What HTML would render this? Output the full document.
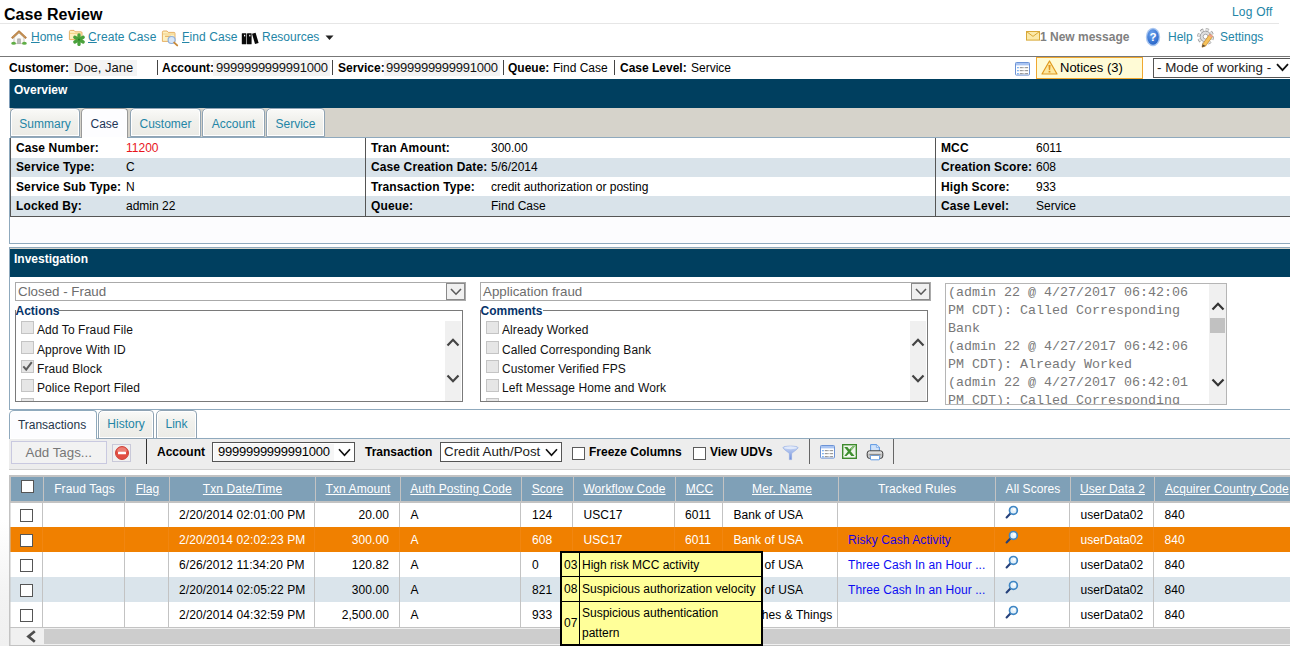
<!DOCTYPE html>
<html><head><meta charset="utf-8"><title>Case Review</title>
<style>
*{box-sizing:border-box;margin:0;padding:0}
html,body{width:1290px;height:646px;overflow:hidden;background:#fff}
body{font-family:"Liberation Sans",Arial,sans-serif;font-size:12px;color:#000;position:relative}
.a{position:absolute;white-space:nowrap}
.t{position:absolute;white-space:nowrap;line-height:14px;height:14px}
.b{font-weight:bold}
.lk{color:#2385a6}
.u{text-decoration:underline}
.bar{position:absolute;left:9px;width:1281px;height:29px;border-left:1px solid #7f9db9;background:#003f5f;color:#fff;font-weight:bold}
.tab{position:absolute;height:29px;border:1px solid #8fa3b3;border-radius:5px 4px 0 0;background:linear-gradient(to bottom,#fafaf8,#f1f1ed 40%,#ebebe6);color:#2385a6;line-height:30px;text-align:center;box-shadow:inset 0 0 0 1px #fff}
.tab.sel{background:#fdfdff;color:#1d3557;border-bottom:none}
.sep{position:absolute;width:1px;background:#333}
.cb{position:absolute;width:13px;height:13px;border:1px solid #5a5a5a;background:#fff}
.cbd{position:absolute;width:13px;height:13px;border:1px solid #c4c4c4;background:#e6e6e6}
.sel{position:absolute;border:1px solid #999;background:#fff}
</style></head><body>

<!-- header -->
<div class="a b" style="left:4px;top:6px;font-size:16px;line-height:18px;letter-spacing:0.05px">Case Review</div>
<div class="t lk" style="left:1232px;top:5px;letter-spacing:0.2px">Log Off</div>
<div class="a" style="left:0;top:23px;width:1279px;height:1px;background:#e6e6e6"></div>
<div class="a" style="left:0;top:56px;width:1290px;height:1px;background:#777"></div>

<!-- nav -->
<div id="nav">
<svg class="a" style="left:11px;top:30px" width="16" height="15" viewBox="0 0 16 15"><path d="M3 7.4 L8 3 L13 7.4 V13.6 H3Z" fill="#fbfaf6" stroke="#b9b2a4" stroke-width="0.7"/><path d="M0.8 8.2 L8 1.4 L15.2 8.2" fill="none" stroke="#b3783a" stroke-width="2.1" stroke-linejoin="round"/><path d="M1.6 7.6 L8 1.8 L14.4 7.6" fill="none" stroke="#d9b27a" stroke-width="0.7"/><rect x="6.4" y="8.6" width="3.2" height="5" fill="#8d8d8d"/><rect x="7" y="9.2" width="2" height="4.4" fill="#b9b9b9"/><ellipse cx="2.6" cy="13.2" rx="2.4" ry="1.5" fill="#5fae45"/><ellipse cx="13.4" cy="13.2" rx="2.4" ry="1.5" fill="#5fae45"/></svg>
<div class="t lk" style="left:31px;top:30px"><span class="u">H</span>ome</div>
<svg class="a" style="left:68px;top:29px" width="18" height="17" viewBox="0 0 18 17"><path d="M1.4 2.6 Q1.4 1.4 2.6 1.4 H6 L7.2 2.8 H13 Q14 2.8 14 3.8 V10.6 H1.4Z" fill="#fdf0c0" stroke="#e0a048" stroke-width="0.8"/><path d="M1.8 4.4 H13.6" stroke="#efc878" stroke-width="0.8"/><g stroke="#4aa23c" stroke-width="3.3" stroke-linecap="round"><path d="M11 5.8 V15.4"/><path d="M6.8 8.2 L15.2 13"/><path d="M15.2 8.2 L6.8 13"/></g><circle cx="11" cy="10.6" r="1.1" fill="#2f7d26"/></svg>
<div class="t lk" style="left:88px;top:30px;letter-spacing:0.1px"><span class="u">C</span>reate Case</div>
<svg class="a" style="left:161px;top:29px" width="18" height="18" viewBox="0 0 18 18"><path d="M1.4 3.2 Q1.4 2 2.6 2 H6 L7.2 3.4 H13 Q14 3.4 14 4.4 V12.4 H1.4Z" fill="#fdf0c0" stroke="#e0a048" stroke-width="0.8"/><path d="M1.8 5 H13.6" stroke="#efc878" stroke-width="0.8"/><rect x="4" y="6.8" width="6" height="0.9" fill="#e0a048"/><circle cx="10.6" cy="11" r="3.5" fill="#d7e6f8" stroke="#8fb0dc" stroke-width="1.2"/><path d="M13.2 13.6 L16.2 16.4" stroke="#c98a3a" stroke-width="1.9" stroke-linecap="round"/></svg>
<div class="t lk" style="left:182px;top:30px;letter-spacing:0.1px"><span class="u">F</span>ind Case</div>
<svg class="a" style="left:241px;top:32px" width="18" height="13" viewBox="0 0 18 13"><rect x="0.8" y="1.2" width="4.6" height="11" rx="0.5" fill="#0a0a0a"/><rect x="6" y="1.2" width="4.6" height="11" rx="0.5" fill="#0a0a0a"/><path d="M11 1.8 L14.6 0.8 L17.6 11 L14 12Z" fill="#0a0a0a"/><rect x="3" y="2.8" width="1.2" height="1.6" fill="#fff"/><rect x="8.2" y="2.8" width="1.2" height="1.6" fill="#fff"/></svg>
<div class="t lk" style="left:262px;top:30px">Resources</div>
<svg class="a" style="left:325px;top:35px" width="9" height="6" viewBox="0 0 9 6"><path d="M0.5 0.5 H8.5 L4.5 5Z" fill="#222"/></svg>

<svg class="a" style="left:1026px;top:31px" width="14" height="10" viewBox="0 0 14 10"><rect x="0.5" y="0.5" width="13" height="8.6" fill="#fbe9a8" stroke="#d8a838"/><path d="M0.5 0.5 L7 5.4 L13.5 0.5" fill="none" stroke="#d8a838"/></svg>
<div class="t b" style="left:1040px;top:30px;color:#808080">1 New message</div>
<svg class="a" style="left:1145px;top:27px" width="16" height="20" viewBox="0 0 16 20"><defs><radialGradient id="hg" cx="0.4" cy="0.3" r="0.8"><stop offset="0" stop-color="#6fa4ee"/><stop offset="1" stop-color="#1f5ec4"/></radialGradient></defs><ellipse cx="8" cy="10" rx="7.2" ry="9.2" fill="#a9c6f0"/><ellipse cx="8" cy="10" rx="5.8" ry="7.8" fill="url(#hg)"/><text x="8" y="14.2" font-family="Liberation Sans,sans-serif" font-weight="bold" font-size="11.5" fill="#fff" text-anchor="middle">?</text></svg>
<div class="t lk" style="left:1168px;top:30px">Help</div>
<svg class="a" style="left:1197px;top:27px" width="18" height="21" viewBox="0 0 18 21"><circle cx="8.6" cy="9.6" r="6.6" fill="none" stroke="#8f8f8f" stroke-width="3.6" stroke-dasharray="2.9 2.28"/><circle cx="8.6" cy="9.6" r="6.6" fill="none" stroke="#e2e2e2" stroke-width="2.4" stroke-dasharray="2.9 2.28"/><circle cx="8.6" cy="9.6" r="5.4" fill="#dedede" stroke="#8f8f8f" stroke-width="0.7"/><circle cx="8.6" cy="9.6" r="2.4" fill="#fff" stroke="#8f8f8f" stroke-width="0.7"/><path d="M5.6 17.2 L12.8 7 L15.8 9.2 L8.6 19 L5 20.2Z" fill="#f6c25a" stroke="#c8882a" stroke-width="0.7"/><path d="M12.8 7 L15.8 9.2 L14.8 10.6 L11.8 8.4Z" fill="#e89a9a"/><path d="M5.6 17.2 L8.6 19 L5 20.2Z" fill="#5a4a3a"/></svg>
<div class="t lk" style="left:1220px;top:30px">Settings</div>
</div>

<!-- customer row -->
<div id="cust">
<div class="t b" style="left:9px;top:61px">Customer:</div>
<div class="a" style="left:69px;top:60px;width:68px;height:16px;background:#f4f4f4"></div>
<div class="t" style="left:74px;top:60px;font-size:13px;line-height:16px;height:16px;color:#111">Doe, Jane</div>
<div class="sep" style="left:157px;top:60px;height:15px;background:#444"></div>
<div class="t b" style="left:162px;top:61px">Account:</div>
<div class="a" style="left:213px;top:60px;width:117px;height:16px;background:#f4f4f4"></div>
<div class="t" style="left:216px;top:60px;font-size:13px;line-height:16px;height:16px;color:#111;letter-spacing:-0.25px" id="acc1">9999999999991000</div>
<div class="sep" style="left:332px;top:60px;height:15px;background:#444"></div>
<div class="t b" style="left:338px;top:61px">Service:</div>
<div class="a" style="left:384px;top:60px;width:116px;height:16px;background:#f4f4f4"></div>
<div class="t" style="left:386px;top:60px;font-size:13px;line-height:16px;height:16px;color:#111;letter-spacing:-0.25px" id="acc2">9999999999991000</div>
<div class="sep" style="left:503px;top:60px;height:15px;background:#444"></div>
<div class="t b" style="left:508px;top:61px">Queue:</div>
<div class="t" style="left:553px;top:61px">Find Case</div>
<div class="sep" style="left:614px;top:60px;height:15px;background:#444"></div>
<div class="t b" style="left:620px;top:61px">Case Level:</div>
<div class="t" style="left:691px;top:61px">Service</div>

<svg class="a" style="left:1015px;top:62px" width="15" height="14" viewBox="0 0 15 14"><rect x="0.5" y="0.5" width="14" height="12.6" rx="0.8" fill="#fff" stroke="#6c93d6"/><rect x="1" y="1" width="13" height="2.4" fill="#a9c4f2"/><rect x="2.3" y="5" width="1.3" height="1.3" fill="#4a90e8"/><rect x="4.8" y="5" width="3" height="1.2" fill="#9a9a9a"/><rect x="8.4" y="5" width="1" height="1.2" fill="#9a9a9a"/><rect x="10.1" y="5" width="3" height="1.2" fill="#9a9a9a"/><rect x="2.3" y="8" width="1.3" height="1.3" fill="#4a90e8"/><rect x="4.8" y="8" width="3" height="1.2" fill="#9a9a9a"/><rect x="8.4" y="8" width="1" height="1.2" fill="#9a9a9a"/><rect x="10.1" y="8" width="3" height="1.2" fill="#9a9a9a"/><rect x="2.3" y="11" width="1.3" height="1.3" fill="#4a90e8"/><rect x="4.8" y="11" width="3" height="1.2" fill="#9a9a9a"/><rect x="8.4" y="11" width="1" height="1.2" fill="#9a9a9a"/><rect x="10.1" y="11" width="3" height="1.2" fill="#9a9a9a"/></svg>
<div class="a" style="left:1036px;top:57px;width:107px;height:22px;background:#fffbd6;border:1px solid #f0a830"></div>
<svg class="a" style="left:1041px;top:60px" width="17" height="15" viewBox="0 0 17 15"><path d="M8.5 1 L16 14 H1Z" fill="#fde9a0" stroke="#e09a20" stroke-width="1.2" stroke-linejoin="round"/><path d="M7.4 5 H9.6 L9.1 10 H7.9Z" fill="#e09520"/><rect x="7.6" y="10.8" width="1.8" height="1.7" fill="#e09520"/></svg>
<div class="t" style="left:1060px;top:60px;font-size:13px;line-height:16px;height:16px">Notices (3)</div>
<div class="sel" style="left:1153px;top:58px;width:140px;height:20px;border-color:#555"></div>
<div class="t" style="left:1157px;top:60px;font-size:13.33px;line-height:16px;height:16px;color:#222">- Mode of working -</div>
<svg class="a" style="left:1276px;top:63px" width="13" height="9" viewBox="0 0 13 9"><path d="M1 1.2 L6.5 7.2 L12 1.2" fill="none" stroke="#111" stroke-width="1.8"/></svg>
</div>

<!-- overview -->
<div class="bar" style="top:79px"><span class="t" style="left:4px;top:4px">Overview</span></div>
<div class="a" style="left:10px;top:108px;width:1280px;height:29px;background:#d6d3cb"></div><div class="a" style="left:10px;top:137px;width:1280px;height:1px;background:#8fa9bd"></div>
<div id="otabs">
<div class="tab" style="left:10px;top:108px;width:70px">Summary</div>
<div class="tab sel" style="left:81px;top:108px;width:47px;height:30px">Case</div>
<div class="tab" style="left:130px;top:108px;width:71px">Customer</div>
<div class="tab" style="left:202px;top:108px;width:63px">Account</div>
<div class="tab" style="left:266px;top:108px;width:59px">Service</div>
</div>
<div id="otable">
<div class="a" style="left:9px;top:138px;width:1281px;height:106px;background:#fcfcfe;border:1px solid #8fa9bd;border-right:none;border-top:none"></div>
<div class="a" style="left:10px;top:138px;width:1280px;height:20px;background:#fff"></div>
<div class="t b" style="letter-spacing:0.12px;left:16px;top:141px">Case Number:</div><div class="t" style="left:126px;top:141px;color:#e8141c;">11200</div><div class="t b" style="letter-spacing:0.12px;left:371px;top:141px">Tran Amount:</div><div class="t" style="left:491px;top:141px">300.00</div><div class="t b" style="letter-spacing:0.12px;left:941px;top:141px">MCC</div><div class="t" style="left:1036px;top:141px">6011</div>
<div class="a" style="left:10px;top:158px;width:1280px;height:19px;background:#d9e3ea"></div>
<div class="t b" style="letter-spacing:0.12px;left:16px;top:160px">Service Type:</div><div class="t" style="left:126px;top:160px;">C</div><div class="t b" style="letter-spacing:0.12px;left:371px;top:160px">Case Creation Date:</div><div class="t" style="left:491px;top:160px">5/6/2014</div><div class="t b" style="letter-spacing:0.12px;left:941px;top:160px">Creation Score:</div><div class="t" style="left:1036px;top:160px">608</div>
<div class="a" style="left:10px;top:177px;width:1280px;height:19px;background:#fff"></div>
<div class="t b" style="letter-spacing:0.12px;left:16px;top:180px">Service Sub Type:</div><div class="t" style="left:126px;top:180px;">N</div><div class="t b" style="letter-spacing:0.12px;left:371px;top:180px">Transaction Type:</div><div class="t" style="left:491px;top:180px">credit authorization or posting</div><div class="t b" style="letter-spacing:0.12px;left:941px;top:180px">High Score:</div><div class="t" style="left:1036px;top:180px">933</div>
<div class="a" style="left:10px;top:196px;width:1280px;height:20px;background:#d9e3ea"></div>
<div class="t b" style="letter-spacing:0.12px;left:16px;top:199px">Locked By:</div><div class="t" style="left:126px;top:199px;">admin 22</div><div class="t b" style="letter-spacing:0.12px;left:371px;top:199px">Queue:</div><div class="t" style="left:491px;top:199px">Find Case</div><div class="t b" style="letter-spacing:0.12px;left:941px;top:199px">Case Level:</div><div class="t" style="left:1036px;top:199px">Service</div>
<div class="a" style="left:365px;top:138px;width:1px;height:78px;background:#555"></div>
<div class="a" style="left:935px;top:138px;width:1px;height:78px;background:#555"></div>
<div class="a" style="left:10px;top:215.5px;width:1280px;height:1px;background:#555"></div>
<div class="a" style="left:10px;top:138px;width:1px;height:78px;background:#555"></div>
</div>

<!-- investigation -->
<div class="a" style="left:9px;top:247px;width:1281px;height:1px;background:#8fa9bd"></div><div class="a" style="left:10px;top:248px;width:1280px;height:1px;background:#d6d3cb"></div><div class="bar" style="top:249px;height:27.5px"><span class="t" style="left:4px;top:3px">Investigation</span></div>
<div id="inv">
<div class="a" style="left:9px;top:409px;width:1281px;height:1px;background:#8fa9bd"></div>
<div class="a" style="left:9px;top:247px;width:1px;height:163px;background:#8fa9bd"></div>
<div class="sel" style="left:15px;top:282px;width:451px;height:19px;border-color:#aaa"></div><div class="t" style="left:18px;top:284px;font-size:13.33px;line-height:15px;height:15px;color:#6d6d6d">Closed - Fraud</div><div class="a" style="left:446px;top:283px;width:19px;height:17px;border:1px solid #8a8a8a;background:#f0f0f0"></div><svg class="a" style="left:450px;top:288px" width="12" height="8" viewBox="0 0 12 8"><path d="M1 1 L6 6.2 L11 1" fill="none" stroke="#5a5a5a" stroke-width="1.6"/></svg>
<div class="sel" style="left:480px;top:282px;width:451px;height:19px;border-color:#aaa"></div><div class="t" style="left:483px;top:284px;font-size:13.33px;line-height:15px;height:15px;color:#6d6d6d">Application fraud</div><div class="a" style="left:911px;top:283px;width:19px;height:17px;border:1px solid #8a8a8a;background:#f0f0f0"></div><svg class="a" style="left:915px;top:288px" width="12" height="8" viewBox="0 0 12 8"><path d="M1 1 L6 6.2 L11 1" fill="none" stroke="#5a5a5a" stroke-width="1.6"/></svg>
<div class="a" style="left:15px;top:310px;width:448px;height:92px;border:1px solid #7a7a7a;background:#fff"></div><div class="a" style="left:16px;top:304px;width:42px;height:13px;background:#fff"></div><div class="t b" style="left:15.5px;top:304px;color:#06346a">Actions</div><div class="a" style="left:445px;top:321px;width:16px;height:80px;background:#f0f0f0"></div><svg class="a" style="left:446px;top:338px" width="14" height="9" viewBox="0 0 14 9"><path d="M1.5 7.5 L7.0 1.8 L12.5 7.5" fill="none" stroke="#444" stroke-width="2.2"/></svg><svg class="a" style="left:446px;top:374px" width="14" height="9" viewBox="0 0 14 9"><path d="M1.5 1.5 L7.0 7.2 L12.5 1.5" fill="none" stroke="#444" stroke-width="2.2"/></svg><div class="cbd" style="left:21px;top:321px"></div><div class="t" style="left:37px;top:323px;color:#111;letter-spacing:0.09px">Add To Fraud File</div><div class="cbd" style="left:21px;top:341px"></div><div class="t" style="left:37px;top:343px;color:#111;letter-spacing:0.09px">Approve With ID</div><div class="cbd" style="left:21px;top:360px"></div><svg class="a" style="left:21px;top:360px" width="13" height="13" viewBox="0 0 13 13"><path d="M2.3 6.3 L5.2 9.6 L10.8 2.2" fill="none" stroke="#5c5c5c" stroke-width="2"/></svg><div class="t" style="left:37px;top:362px;color:#111;letter-spacing:0.09px">Fraud Block</div><div class="cbd" style="left:21px;top:379px"></div><div class="t" style="left:37px;top:381px;color:#111;letter-spacing:0.09px">Police Report Filed</div><div class="a" style="left:21px;top:398px;width:13px;height:3px;background:#e6e6e6;border:1px solid #c4c4c4;border-bottom:none"></div>
<div class="a" style="left:480px;top:310px;width:448px;height:92px;border:1px solid #7a7a7a;background:#fff"></div><div class="a" style="left:481px;top:304px;width:62px;height:13px;background:#fff"></div><div class="t b" style="left:480.5px;top:304px;color:#06346a">Comments</div><div class="a" style="left:910px;top:321px;width:16px;height:80px;background:#f0f0f0"></div><svg class="a" style="left:911px;top:338px" width="14" height="9" viewBox="0 0 14 9"><path d="M1.5 7.5 L7.0 1.8 L12.5 7.5" fill="none" stroke="#444" stroke-width="2.2"/></svg><svg class="a" style="left:911px;top:374px" width="14" height="9" viewBox="0 0 14 9"><path d="M1.5 1.5 L7.0 7.2 L12.5 1.5" fill="none" stroke="#444" stroke-width="2.2"/></svg><div class="cbd" style="left:486px;top:321px"></div><div class="t" style="left:502px;top:323px;color:#111;letter-spacing:0.09px">Already Worked</div><div class="cbd" style="left:486px;top:341px"></div><div class="t" style="left:502px;top:343px;color:#111;letter-spacing:0.09px">Called Corresponding Bank</div><div class="cbd" style="left:486px;top:360px"></div><div class="t" style="left:502px;top:362px;color:#111;letter-spacing:0.09px">Customer Verified FPS</div><div class="cbd" style="left:486px;top:379px"></div><div class="t" style="left:502px;top:381px;color:#111;letter-spacing:0.09px">Left Message Home and Work</div><div class="a" style="left:486px;top:398px;width:13px;height:3px;background:#e6e6e6;border:1px solid #c4c4c4;border-bottom:none"></div>
<div class="a" style="left:945px;top:283px;width:282px;height:122px;border:1px solid #b5b5b5;background:#fff;overflow:hidden"><div style="position:absolute;left:2px;top:0;width:262px;font-family:'Liberation Mono',monospace;font-size:13.33px;line-height:18px;color:#787878;white-space:pre">(admin 22 @ 4/27/2017 06:42:06
PM CDT): Called Corresponding
Bank
(admin 22 @ 4/27/2017 06:42:06
PM CDT): Already Worked
(admin 22 @ 4/27/2017 06:42:01
PM CDT): Called Corresponding
Bank</div><div style="position:absolute;left:263px;top:0;width:17px;height:120px;background:#f0f0f0"></div><div style="position:absolute;left:264px;top:34px;width:15px;height:15px;background:#c1c1c1"></div></div><svg class="a" style="left:1210.5px;top:302px" width="14" height="9" viewBox="0 0 14 9"><path d="M1.5 7.5 L7.0 1.8 L12.5 7.5" fill="none" stroke="#333" stroke-width="2.2"/></svg><svg class="a" style="left:1210.5px;top:378px" width="14" height="9" viewBox="0 0 14 9"><path d="M1.5 1.5 L7.0 7.2 L12.5 1.5" fill="none" stroke="#333" stroke-width="2.2"/></svg>
</div>

<!-- transactions -->
<div id="ttabs">
<div class="a" style="left:96px;top:438px;width:1194px;height:1px;background:#8fa9bd"></div>
<div class="tab sel" style="left:9px;top:410px;width:88px;height:29px;border-color:#8fa9bd;line-height:28px;color:#26364a;padding-right:2px">Transactions</div>
<div class="tab" style="left:98px;top:410px;width:56px;height:29px;line-height:27px">History</div>
<div class="tab" style="left:156px;top:410px;width:41px;height:29px;line-height:27px">Link</div>
</div>
<div id="tbar">
<div class="a" style="left:9px;top:439px;width:1281px;height:31px;background:#ededed;border-bottom:1px solid #d0d0d0"></div>
<div class="a" style="left:11px;top:441px;width:96px;height:23px;border:1px solid #c9c9e0;background:#f2f2f2"></div><div class="t" style="left:25.5px;top:444.5px;font-size:13.33px;line-height:16px;height:16px;color:#777">Add Tags...</div>
<div class="a" style="left:112px;top:444px;width:19px;height:18px;border:1px solid #c9c9d9;background:#f0f0f0"></div><svg class="a" style="left:114px;top:445px" width="16" height="16" viewBox="0 0 16 16"><circle cx="8" cy="8" r="6.5" fill="#e24e42" stroke="#c93a30" stroke-width="0.9"/><ellipse cx="8" cy="5.6" rx="4.8" ry="3.4" fill="#f4a096" opacity="0.6"/><rect x="4" y="6.7" width="8" height="2.6" rx="0.6" fill="#fff"/></svg>
<div class="sep" style="left:146px;top:439px;height:25px"></div>
<div class="t b" style="left:157px;top:445px">Account</div><div class="sel" style="left:212px;top:442px;width:143px;height:20px;border-color:#555"></div><div class="a" style="left:214px;top:444px;width:120px;height:17px;background:#f6f6f6"></div><div class="t" style="left:218px;top:444px;font-size:13px;line-height:16px;height:16px;letter-spacing:-0.25px">9999999999991000</div><svg class="a" style="left:338px;top:448px" width="13" height="9" viewBox="0 0 13 9"><path d="M1 1.2 L6.5 7.2 L12 1.2" fill="none" stroke="#111" stroke-width="1.7"/></svg>
<div class="t b" style="left:365px;top:445px">Transaction</div><div class="sel" style="left:440px;top:442px;width:122px;height:20px;border-color:#555"></div><div class="t" style="left:444px;top:444px;font-size:13.33px;line-height:16px;height:16px;color:#222">Credit Auth/Post</div><svg class="a" style="left:545px;top:448px" width="13" height="9" viewBox="0 0 13 9"><path d="M1 1.2 L6.5 7.2 L12 1.2" fill="none" stroke="#111" stroke-width="1.7"/></svg>
<div class="cb" style="left:572px;top:447px"></div><div class="t b" style="left:589px;top:445px">Freeze Columns</div>
<div class="cb" style="left:693px;top:447px"></div><div class="t b" style="left:710px;top:445px">View UDVs</div>
<svg class="a" style="left:782px;top:445px" width="17" height="16" viewBox="0 0 17 16"><defs><linearGradient id="fg" x1="0" y1="0" x2="0" y2="1"><stop offset="0" stop-color="#cfdcf6"/><stop offset="1" stop-color="#6f8fdc"/></linearGradient></defs><path d="M1 2.6 C1 0.6 16 0.6 16 2.6 C16 4 12 6.2 9.6 8.6 V14.6 H7.4 V8.6 C5 6.2 1 4 1 2.6Z" fill="url(#fg)" stroke="#8aa4e0" stroke-width="0.6"/><ellipse cx="8.5" cy="2.8" rx="6.4" ry="1.5" fill="#e4ecfb" opacity="0.9"/></svg>
<div class="sep" style="left:809px;top:439px;height:25px;background:#666"></div>
<svg class="a" style="left:820px;top:445px" width="15" height="14" viewBox="0 0 15 14"><rect x="0.5" y="0.5" width="14" height="12.6" rx="0.8" fill="#fff" stroke="#6c93d6"/><rect x="1" y="1" width="13" height="2.4" fill="#a9c4f2"/><rect x="2.3" y="5" width="1.3" height="1.3" fill="#4a90e8"/><rect x="4.8" y="5" width="3" height="1.2" fill="#9a9a9a"/><rect x="8.4" y="5" width="1" height="1.2" fill="#9a9a9a"/><rect x="10.1" y="5" width="3" height="1.2" fill="#9a9a9a"/><rect x="2.3" y="8" width="1.3" height="1.3" fill="#4a90e8"/><rect x="4.8" y="8" width="3" height="1.2" fill="#9a9a9a"/><rect x="8.4" y="8" width="1" height="1.2" fill="#9a9a9a"/><rect x="10.1" y="8" width="3" height="1.2" fill="#9a9a9a"/><rect x="2.3" y="11" width="1.3" height="1.3" fill="#4a90e8"/><rect x="4.8" y="11" width="3" height="1.2" fill="#9a9a9a"/><rect x="8.4" y="11" width="1" height="1.2" fill="#9a9a9a"/><rect x="10.1" y="11" width="3" height="1.2" fill="#9a9a9a"/></svg>
<svg class="a" style="left:842px;top:444px" width="15" height="15" viewBox="0 0 15 15"><rect x="0.7" y="0.7" width="13.6" height="13.6" fill="#eef6ea" stroke="#3d8a2c" stroke-width="1.4"/><rect x="1.4" y="11.2" width="12.2" height="1" fill="#fff"/><path d="M2.2 3 H5.4 L7.3 5.6 L10.6 2.2 H13 L8.6 7.2 L12.6 12 H9.2 L7.2 9.2 L4.6 12 H2.2 L5.9 7.4Z" fill="#3f8f2f"/><path d="M10.6 2.2 H13 L9.6 6 L8.4 5Z" fill="#8cc47c"/></svg>
<svg class="a" style="left:866px;top:444px" width="18" height="17" viewBox="0 0 18 17"><defs><linearGradient id="pg" x1="0" y1="0" x2="0" y2="1"><stop offset="0" stop-color="#f4f4f4"/><stop offset="0.55" stop-color="#bdbdbd"/><stop offset="1" stop-color="#e0e0e0"/></linearGradient></defs><path d="M4.6 7.5 V0.6 H10.6 L13.4 3.2 V7.5Z" fill="#cfe2fa" stroke="#4f8fe0" stroke-width="0.9"/><path d="M10.4 0.8 V3.4 H13.2" fill="#eaf2fd" stroke="#4f8fe0" stroke-width="0.6"/><rect x="1.2" y="6.8" width="15.6" height="7.6" rx="2.4" fill="url(#pg)" stroke="#3c3c3c" stroke-width="1"/><rect x="4.4" y="11.4" width="9.2" height="4.4" rx="0.8" fill="#fff" stroke="#4f8fe0" stroke-width="0.9"/><rect x="3.4" y="10" width="11.2" height="1.2" fill="#8c8c8c"/></svg>
<div class="sep" style="left:893px;top:439px;height:25px;background:#666"></div>
</div>
<div id="grid">
<div class="a" style="left:9px;top:475px;width:1281px;height:171px;background:#c3c3c3"></div>
<div class="a" style="left:0;top:520px;width:9px;height:126px;background:linear-gradient(to bottom,#fff,#f3f3f3 60%,#f0f0f0)"></div>
<div class="a" style="left:11px;top:477px;width:1279px;height:24px;background:#7fa0b7"></div>
<div class="a" style="left:43px;top:477px;width:1px;height:24px;background:#c3c3c3"></div><div class="t" style="left:44px;top:482px;width:81px;text-align:center;color:#fff;letter-spacing:0.08px;">Fraud Tags</div>
<div class="a" style="left:125px;top:477px;width:1px;height:24px;background:#c3c3c3"></div><div class="t u" style="left:126px;top:482px;width:43px;text-align:center;color:#fff;letter-spacing:0.08px;">Flag</div>
<div class="a" style="left:169px;top:477px;width:1px;height:24px;background:#c3c3c3"></div><div class="t u" style="left:170px;top:482px;width:145px;text-align:center;color:#fff;letter-spacing:0.08px;">Txn Date/Time</div>
<div class="a" style="left:315px;top:477px;width:1px;height:24px;background:#c3c3c3"></div><div class="t u" style="left:316px;top:482px;width:84px;text-align:center;color:#fff;letter-spacing:0.08px;">Txn Amount</div>
<div class="a" style="left:400px;top:477px;width:1px;height:24px;background:#c3c3c3"></div><div class="t u" style="left:401px;top:482px;width:120px;text-align:center;color:#fff;letter-spacing:0.08px;">Auth Posting Code</div>
<div class="a" style="left:521px;top:477px;width:1px;height:24px;background:#c3c3c3"></div><div class="t u" style="left:522px;top:482px;width:51px;text-align:center;color:#fff;letter-spacing:0.08px;">Score</div>
<div class="a" style="left:573px;top:477px;width:1px;height:24px;background:#c3c3c3"></div><div class="t u" style="left:574px;top:482px;width:101px;text-align:center;color:#fff;letter-spacing:0.08px;">Workflow Code</div>
<div class="a" style="left:675px;top:477px;width:1px;height:24px;background:#c3c3c3"></div><div class="t u" style="left:676px;top:482px;width:47px;text-align:center;color:#fff;letter-spacing:0.08px;">MCC</div>
<div class="a" style="left:723px;top:477px;width:1px;height:24px;background:#c3c3c3"></div><div class="t u" style="left:752px;top:482px;color:#fff;letter-spacing:0.15px">Mer. Name</div>
<div class="a" style="left:838px;top:477px;width:1px;height:24px;background:#c3c3c3"></div><div class="t" style="left:839px;top:482px;width:156px;text-align:center;color:#fff;letter-spacing:0.08px;">Tracked Rules</div>
<div class="a" style="left:995px;top:477px;width:1px;height:24px;background:#c3c3c3"></div><div class="t" style="left:996px;top:482px;width:74px;text-align:center;color:#fff;letter-spacing:0.08px;">All Scores</div>
<div class="a" style="left:1070px;top:477px;width:1px;height:24px;background:#c3c3c3"></div><div class="t u" style="left:1071px;top:482px;width:83px;text-align:center;color:#fff;letter-spacing:0.08px;">User Data 2</div>
<div class="a" style="left:1154px;top:477px;width:1px;height:24px;background:#c3c3c3"></div><div class="t u" style="left:1165px;top:482px;color:#fff;letter-spacing:0.08px;">Acquirer Country Code</div>
<div class="cb" style="left:21px;top:480px;border-color:#555"></div>
<div class="a" style="left:10px;top:503px;width:1280px;height:24px;background:#fff"></div><div class="a" style="left:42px;top:503px;width:1px;height:24px;background:#c3c3c3"></div><div class="a" style="left:124px;top:503px;width:1px;height:24px;background:#c3c3c3"></div><div class="a" style="left:168px;top:503px;width:1px;height:24px;background:#c3c3c3"></div><div class="a" style="left:314px;top:503px;width:1px;height:24px;background:#c3c3c3"></div><div class="a" style="left:399px;top:503px;width:1px;height:24px;background:#c3c3c3"></div><div class="a" style="left:520px;top:503px;width:1px;height:24px;background:#c3c3c3"></div><div class="a" style="left:572px;top:503px;width:1px;height:24px;background:#c3c3c3"></div><div class="a" style="left:674px;top:503px;width:1px;height:24px;background:#c3c3c3"></div><div class="a" style="left:722px;top:503px;width:1px;height:24px;background:#c3c3c3"></div><div class="a" style="left:837px;top:503px;width:1px;height:24px;background:#c3c3c3"></div><div class="a" style="left:994px;top:503px;width:1px;height:24px;background:#c3c3c3"></div><div class="a" style="left:1069px;top:503px;width:1px;height:24px;background:#c3c3c3"></div><div class="a" style="left:1153px;top:503px;width:1px;height:24px;background:#c3c3c3"></div><div class="cb" style="left:20px;top:509px;border-color:#555"></div><div class="t" style="left:179px;top:508px;color:#000;letter-spacing:0.08px;">2/20/2014 02:01:00 PM</div><div class="t" style="left:314px;width:75px;text-align:right;top:508px;color:#000;letter-spacing:0.08px;">20.00</div><div class="t" style="left:410.5px;top:508px;color:#000;letter-spacing:0.08px;">A</div><div class="t" style="left:532px;top:508px;color:#000;letter-spacing:0.08px;">124</div><div class="t" style="left:583.5px;top:508px;color:#000;letter-spacing:0.08px;">USC17</div><div class="t" style="left:685px;top:508px;color:#000;letter-spacing:0.08px;">6011</div><div class="t" style="left:733.5px;top:508px;color:#000;letter-spacing:0.08px;">Bank of USA</div><svg class="a" style="left:1004.5px;top:505px" width="14" height="14" viewBox="0 0 14 14"><path d="M5.4 8.6 L1.6 12.4" stroke="#24407a" stroke-width="2.1" stroke-linecap="round"/><circle cx="8.4" cy="5.4" r="3.9" fill="#e4f1fa" stroke="#3f86c4" stroke-width="1.7"/><circle cx="9.2" cy="4.6" r="1.3" fill="#fff"/></svg><div class="t" style="left:1080.5px;top:508px;color:#000;letter-spacing:0.08px;">userData02</div><div class="t" style="left:1164.5px;top:508px;color:#000;letter-spacing:0.08px;">840</div>
<div class="a" style="left:10px;top:527px;width:1280px;height:25px;background:#f08000"></div><div class="a" style="left:42px;top:527px;width:1px;height:25px;background:#f18610"></div><div class="a" style="left:124px;top:527px;width:1px;height:25px;background:#f18610"></div><div class="a" style="left:168px;top:527px;width:1px;height:25px;background:#f18610"></div><div class="a" style="left:314px;top:527px;width:1px;height:25px;background:#f18610"></div><div class="a" style="left:399px;top:527px;width:1px;height:25px;background:#f18610"></div><div class="a" style="left:520px;top:527px;width:1px;height:25px;background:#f18610"></div><div class="a" style="left:572px;top:527px;width:1px;height:25px;background:#f18610"></div><div class="a" style="left:674px;top:527px;width:1px;height:25px;background:#f18610"></div><div class="a" style="left:722px;top:527px;width:1px;height:25px;background:#f18610"></div><div class="a" style="left:837px;top:527px;width:1px;height:25px;background:#f18610"></div><div class="a" style="left:994px;top:527px;width:1px;height:25px;background:#f18610"></div><div class="a" style="left:1069px;top:527px;width:1px;height:25px;background:#f18610"></div><div class="a" style="left:1153px;top:527px;width:1px;height:25px;background:#f18610"></div><div class="cb" style="left:20px;top:534px;border-color:#555"></div><div class="t" style="left:179px;top:533px;color:#fff;letter-spacing:0.08px;">2/20/2014 02:02:23 PM</div><div class="t" style="left:314px;width:75px;text-align:right;top:533px;color:#fff;letter-spacing:0.08px;">300.00</div><div class="t" style="left:410.5px;top:533px;color:#fff;letter-spacing:0.08px;">A</div><div class="t" style="left:532px;top:533px;color:#fff;letter-spacing:0.08px;">608</div><div class="t" style="left:583.5px;top:533px;color:#fff;letter-spacing:0.08px;">USC17</div><div class="t" style="left:685px;top:533px;color:#fff;letter-spacing:0.08px;">6011</div><div class="t" style="left:733.5px;top:533px;color:#fff;letter-spacing:0.08px;">Bank of USA</div><div class="t" style="left:848px;top:533px;color:#1c00e4;letter-spacing:0.08px;">Risky Cash Activity</div><svg class="a" style="left:1004.5px;top:530px" width="14" height="14" viewBox="0 0 14 14"><path d="M5.4 8.6 L1.6 12.4" stroke="#24407a" stroke-width="2.1" stroke-linecap="round"/><circle cx="8.4" cy="5.4" r="3.9" fill="#e4f1fa" stroke="#3f86c4" stroke-width="1.7"/><circle cx="9.2" cy="4.6" r="1.3" fill="#fff"/></svg><div class="t" style="left:1080.5px;top:533px;color:#fff;letter-spacing:0.08px;">userData02</div><div class="t" style="left:1164.5px;top:533px;color:#fff;letter-spacing:0.08px;">840</div>
<div class="a" style="left:10px;top:552px;width:1280px;height:25px;background:#fff"></div><div class="a" style="left:42px;top:552px;width:1px;height:25px;background:#c3c3c3"></div><div class="a" style="left:124px;top:552px;width:1px;height:25px;background:#c3c3c3"></div><div class="a" style="left:168px;top:552px;width:1px;height:25px;background:#c3c3c3"></div><div class="a" style="left:314px;top:552px;width:1px;height:25px;background:#c3c3c3"></div><div class="a" style="left:399px;top:552px;width:1px;height:25px;background:#c3c3c3"></div><div class="a" style="left:520px;top:552px;width:1px;height:25px;background:#c3c3c3"></div><div class="a" style="left:572px;top:552px;width:1px;height:25px;background:#c3c3c3"></div><div class="a" style="left:674px;top:552px;width:1px;height:25px;background:#c3c3c3"></div><div class="a" style="left:722px;top:552px;width:1px;height:25px;background:#c3c3c3"></div><div class="a" style="left:837px;top:552px;width:1px;height:25px;background:#c3c3c3"></div><div class="a" style="left:994px;top:552px;width:1px;height:25px;background:#c3c3c3"></div><div class="a" style="left:1069px;top:552px;width:1px;height:25px;background:#c3c3c3"></div><div class="a" style="left:1153px;top:552px;width:1px;height:25px;background:#c3c3c3"></div><div class="a" style="left:11px;top:577px;width:1279px;height:1px;background:#c3c3c3"></div><div class="cb" style="left:20px;top:559px;border-color:#555"></div><div class="t" style="left:179px;top:558px;color:#000;letter-spacing:0.08px;">6/26/2012 11:34:20 PM</div><div class="t" style="left:314px;width:75px;text-align:right;top:558px;color:#000;letter-spacing:0.08px;">120.82</div><div class="t" style="left:410.5px;top:558px;color:#000;letter-spacing:0.08px;">A</div><div class="t" style="left:532px;top:558px;color:#000;letter-spacing:0.08px;">0</div><div class="t" style="left:583.5px;top:558px;color:#000;letter-spacing:0.08px;">USC17</div><div class="t" style="left:685px;top:558px;color:#000;letter-spacing:0.08px;">6011</div><div class="t" style="left:733.5px;top:558px;color:#000;letter-spacing:0.08px;">Bank of USA</div><div class="t" style="left:848px;top:558px;color:#0c0cf2;letter-spacing:0.08px;">Three Cash In an Hour ...</div><svg class="a" style="left:1004.5px;top:555px" width="14" height="14" viewBox="0 0 14 14"><path d="M5.4 8.6 L1.6 12.4" stroke="#24407a" stroke-width="2.1" stroke-linecap="round"/><circle cx="8.4" cy="5.4" r="3.9" fill="#e4f1fa" stroke="#3f86c4" stroke-width="1.7"/><circle cx="9.2" cy="4.6" r="1.3" fill="#fff"/></svg><div class="t" style="left:1080.5px;top:558px;color:#000;letter-spacing:0.08px;">userData02</div><div class="t" style="left:1164.5px;top:558px;color:#000;letter-spacing:0.08px;">840</div>
<div class="a" style="left:10px;top:577px;width:1280px;height:25px;background:#dae4eb"></div><div class="a" style="left:42px;top:577px;width:1px;height:25px;background:#c3c3c3"></div><div class="a" style="left:124px;top:577px;width:1px;height:25px;background:#c3c3c3"></div><div class="a" style="left:168px;top:577px;width:1px;height:25px;background:#c3c3c3"></div><div class="a" style="left:314px;top:577px;width:1px;height:25px;background:#c3c3c3"></div><div class="a" style="left:399px;top:577px;width:1px;height:25px;background:#c3c3c3"></div><div class="a" style="left:520px;top:577px;width:1px;height:25px;background:#c3c3c3"></div><div class="a" style="left:572px;top:577px;width:1px;height:25px;background:#c3c3c3"></div><div class="a" style="left:674px;top:577px;width:1px;height:25px;background:#c3c3c3"></div><div class="a" style="left:722px;top:577px;width:1px;height:25px;background:#c3c3c3"></div><div class="a" style="left:837px;top:577px;width:1px;height:25px;background:#c3c3c3"></div><div class="a" style="left:994px;top:577px;width:1px;height:25px;background:#c3c3c3"></div><div class="a" style="left:1069px;top:577px;width:1px;height:25px;background:#c3c3c3"></div><div class="a" style="left:1153px;top:577px;width:1px;height:25px;background:#c3c3c3"></div><div class="a" style="left:11px;top:602px;width:1279px;height:1px;background:#c3c3c3"></div><div class="cb" style="left:20px;top:584px;border-color:#555"></div><div class="t" style="left:179px;top:583px;color:#000;letter-spacing:0.08px;">2/20/2014 02:05:22 PM</div><div class="t" style="left:314px;width:75px;text-align:right;top:583px;color:#000;letter-spacing:0.08px;">300.00</div><div class="t" style="left:410.5px;top:583px;color:#000;letter-spacing:0.08px;">A</div><div class="t" style="left:532px;top:583px;color:#000;letter-spacing:0.08px;">821</div><div class="t" style="left:583.5px;top:583px;color:#000;letter-spacing:0.08px;">USC17</div><div class="t" style="left:685px;top:583px;color:#000;letter-spacing:0.08px;">6011</div><div class="t" style="left:733.5px;top:583px;color:#000;letter-spacing:0.08px;">Bank of USA</div><div class="t" style="left:848px;top:583px;color:#0c0cf2;letter-spacing:0.08px;">Three Cash In an Hour ...</div><svg class="a" style="left:1004.5px;top:580px" width="14" height="14" viewBox="0 0 14 14"><path d="M5.4 8.6 L1.6 12.4" stroke="#24407a" stroke-width="2.1" stroke-linecap="round"/><circle cx="8.4" cy="5.4" r="3.9" fill="#e4f1fa" stroke="#3f86c4" stroke-width="1.7"/><circle cx="9.2" cy="4.6" r="1.3" fill="#fff"/></svg><div class="t" style="left:1080.5px;top:583px;color:#000;letter-spacing:0.08px;">userData02</div><div class="t" style="left:1164.5px;top:583px;color:#000;letter-spacing:0.08px;">840</div>
<div class="a" style="left:10px;top:602px;width:1280px;height:25px;background:#fff"></div><div class="a" style="left:42px;top:602px;width:1px;height:25px;background:#c3c3c3"></div><div class="a" style="left:124px;top:602px;width:1px;height:25px;background:#c3c3c3"></div><div class="a" style="left:168px;top:602px;width:1px;height:25px;background:#c3c3c3"></div><div class="a" style="left:314px;top:602px;width:1px;height:25px;background:#c3c3c3"></div><div class="a" style="left:399px;top:602px;width:1px;height:25px;background:#c3c3c3"></div><div class="a" style="left:520px;top:602px;width:1px;height:25px;background:#c3c3c3"></div><div class="a" style="left:572px;top:602px;width:1px;height:25px;background:#c3c3c3"></div><div class="a" style="left:674px;top:602px;width:1px;height:25px;background:#c3c3c3"></div><div class="a" style="left:722px;top:602px;width:1px;height:25px;background:#c3c3c3"></div><div class="a" style="left:837px;top:602px;width:1px;height:25px;background:#c3c3c3"></div><div class="a" style="left:994px;top:602px;width:1px;height:25px;background:#c3c3c3"></div><div class="a" style="left:1069px;top:602px;width:1px;height:25px;background:#c3c3c3"></div><div class="a" style="left:1153px;top:602px;width:1px;height:25px;background:#c3c3c3"></div><div class="a" style="left:11px;top:627px;width:1279px;height:1px;background:#c3c3c3"></div><div class="cb" style="left:20px;top:609px;border-color:#555"></div><div class="t" style="left:179px;top:608px;color:#000;letter-spacing:0.08px;">2/20/2014 04:32:59 PM</div><div class="t" style="left:314px;width:75px;text-align:right;top:608px;color:#000;letter-spacing:0.08px;">2,500.00</div><div class="t" style="left:410.5px;top:608px;color:#000;letter-spacing:0.08px;">A</div><div class="t" style="left:532px;top:608px;color:#000;letter-spacing:0.08px;">933</div><div class="t" style="left:583.5px;top:608px;color:#000;letter-spacing:0.08px;">USC17</div><div class="t" style="left:685px;top:608px;color:#000;letter-spacing:0.08px;">5999</div><div class="t" style="left:740px;top:608px;color:#000;letter-spacing:0.08px;">Clothes &amp; Things</div><svg class="a" style="left:1004.5px;top:605px" width="14" height="14" viewBox="0 0 14 14"><path d="M5.4 8.6 L1.6 12.4" stroke="#24407a" stroke-width="2.1" stroke-linecap="round"/><circle cx="8.4" cy="5.4" r="3.9" fill="#e4f1fa" stroke="#3f86c4" stroke-width="1.7"/><circle cx="9.2" cy="4.6" r="1.3" fill="#fff"/></svg><div class="t" style="left:1080.5px;top:608px;color:#000;letter-spacing:0.08px;">userData02</div><div class="t" style="left:1164.5px;top:608px;color:#000;letter-spacing:0.08px;">840</div>
<div class="a" style="left:10px;top:628px;width:1280px;height:17px;background:#f0f0f0"></div><div class="a" style="left:44px;top:629px;width:1246px;height:15px;background:#cdcdcd"></div><div class="a" style="left:10px;top:477px;width:1px;height:168px;background:rgba(195,195,195,0.5)"></div><svg class="a" style="left:26px;top:630px" width="11" height="13" viewBox="0 0 11 13"><path d="M8.8 1.2 L2.4 6.5 L8.8 11.8" fill="none" stroke="#4d4d4d" stroke-width="2.7"/></svg>
</div>
<div id="tip">
<div class="a" style="left:560px;top:551px;width:203px;height:97px;background:#000"></div><div class="a" style="left:562px;top:553px;width:17px;height:23px;background:#ffff99"></div><div class="a" style="left:580px;top:553px;width:181px;height:23px;background:#ffff99"></div><div class="a" style="left:562px;top:577px;width:17px;height:24px;background:#ffff99"></div><div class="a" style="left:580px;top:577px;width:181px;height:24px;background:#ffff99"></div><div class="a" style="left:562px;top:602px;width:17px;height:42px;background:#ffff99"></div><div class="a" style="left:580px;top:602px;width:181px;height:42px;background:#ffff99"></div><div class="t" style="left:564px;top:558px">03</div><div class="t" style="left:582px;top:558px">High risk MCC activity</div><div class="t" style="left:564px;top:582px">08</div><div class="t" style="left:582px;top:582px">Suspicious authorization velocity</div><div class="t" style="left:564px;top:616px">07</div><div class="t" style="left:582px;top:606px">Suspicious authentication</div><div class="t" style="left:582px;top:626px">pattern</div>
</div>

</body></html>
